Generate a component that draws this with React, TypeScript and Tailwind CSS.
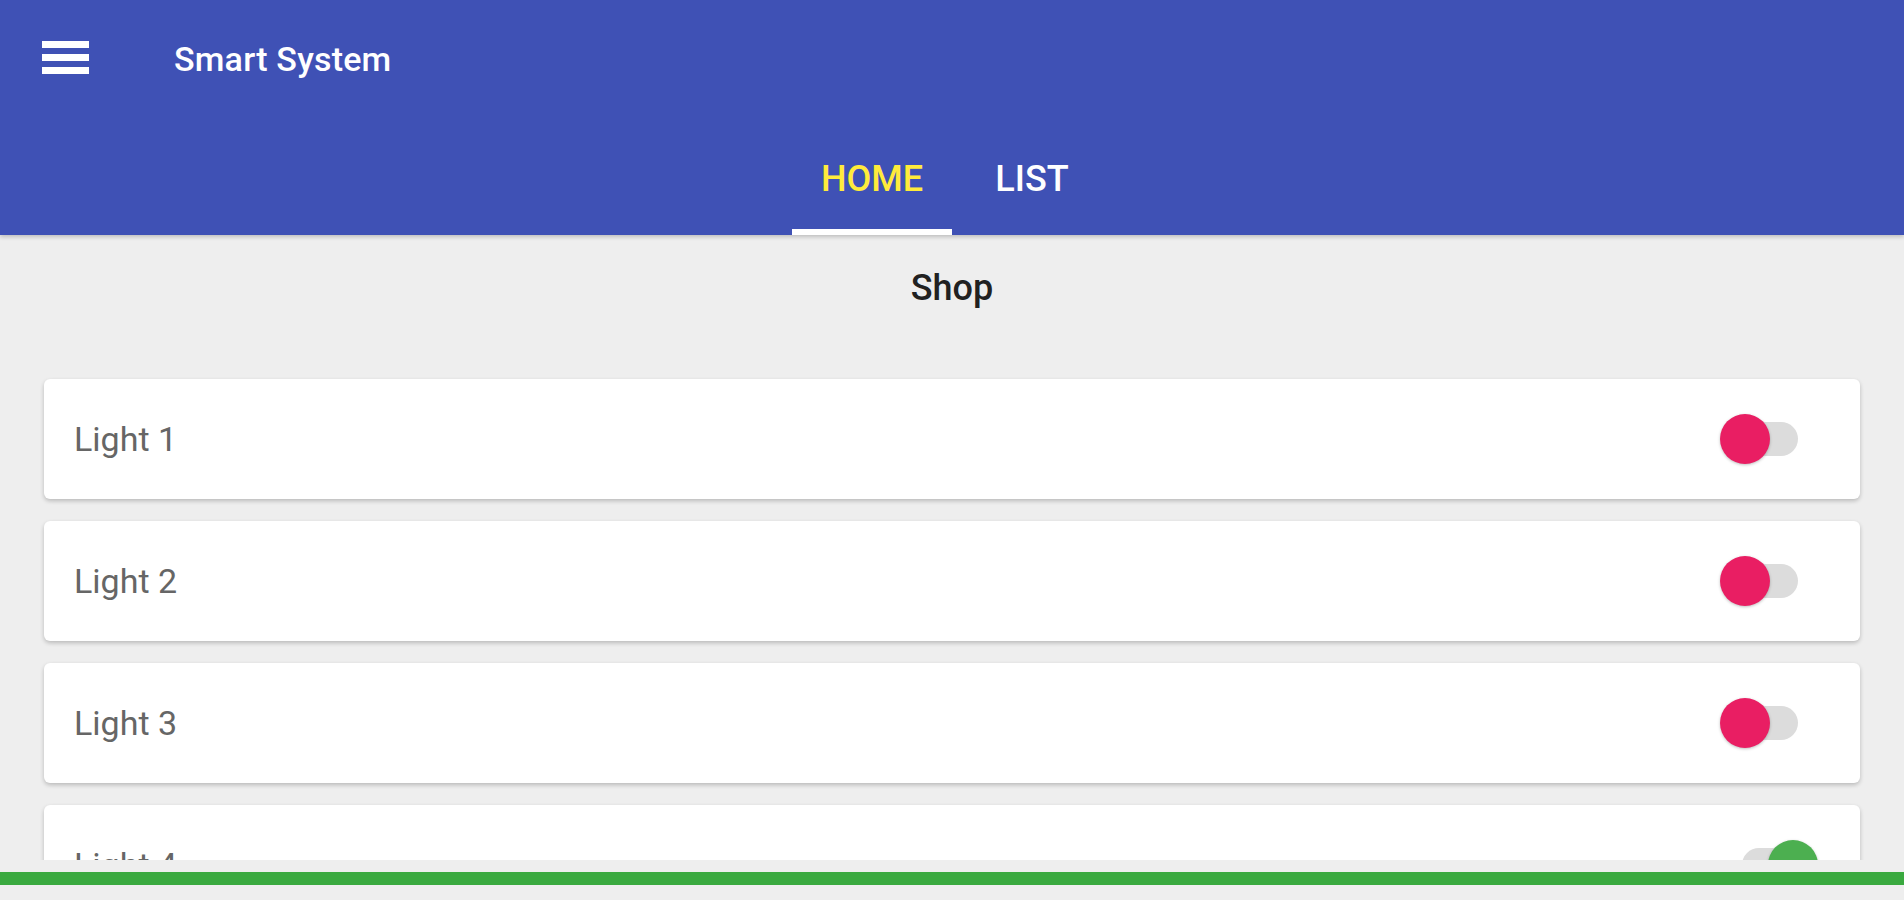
import React from "react";

function Switch({ on }: { on: boolean }) {
  return (
    <div className="relative w-[100px] h-[50px]">
      {on ? (
        <>
          <div className="absolute left-[22px] top-[8px] w-[76px] h-[34px] rounded-full bg-[#dcdcdc]" />
          <div className="absolute right-[2px] top-0 w-[50px] h-[50px] rounded-full bg-[#4caf50] shadow-[0_1px_3px_rgba(0,0,0,0.25)]" />
        </>
      ) : (
        <>
          <div className="absolute left-[2px] top-[8px] w-[76px] h-[34px] rounded-full bg-[#dcdcdc]" />
          <div className="absolute left-0 top-0 w-[50px] h-[50px] rounded-full bg-[#e91e63] shadow-[0_1px_3px_rgba(0,0,0,0.25)]" />
        </>
      )}
    </div>
  );
}

function Card({ label, on }: { label: string; on: boolean }) {
  return (
    <div className="h-[120px] bg-white rounded-[6px] shadow-[0_2px_4px_rgba(0,0,0,0.22)] flex items-center justify-between pl-[30px] pr-[40px] shrink-0">
      <span className="text-[34px] text-[#666666] font-normal">{label}</span>
      <Switch on={on} />
    </div>
  );
}

export default function App() {
  return (
    <div
      className="h-screen w-full flex flex-col bg-[#eeeeee] overflow-hidden"
      style={{ fontFamily: "Roboto, 'Noto Sans', sans-serif" }}
    >
      <header className="h-[235px] bg-[#3f51b5] flex flex-col shrink-0 shadow-[0_2px_4px_rgba(0,0,0,0.2)] relative z-10">
        <div className="h-[114px] flex items-center pl-[42px]">
          <div className="flex flex-col gap-[6px] w-[47px]">
            <div className="h-[7px] bg-white" />
            <div className="h-[7px] bg-white" />
            <div className="h-[7px] bg-white" />
          </div>
          <div className="ml-[85px] text-white text-[34px] font-medium tracking-[0.2px] mt-[4px]">
            Smart System
          </div>
        </div>
        <div className="flex-1 flex justify-center">
          <div className="w-[160px] flex flex-col">
            <div className="flex-1 flex items-center justify-center pt-[14px] text-[36px] font-medium text-[#ffeb3b]">
              HOME
            </div>
            <div className="h-[6px] bg-white" />
          </div>
          <div className="w-[160px] flex flex-col">
            <div className="flex-1 flex items-center justify-center pt-[14px] text-[36px] font-medium text-white">
              LIST
            </div>
            <div className="h-[6px]" />
          </div>
        </div>
      </header>
      <main className="h-[625px] overflow-hidden shrink-0 flex flex-col">
        <div className="h-[144px] flex items-start justify-center pt-[26px] shrink-0">
          <h1 className="text-[36px] font-medium text-[#212121]">Shop</h1>
        </div>
        <div className="flex flex-col gap-[22px] px-[44px]">
          <Card label="Light 1" on={false} />
          <Card label="Light 2" on={false} />
          <Card label="Light 3" on={false} />
          <Card label="Light 4" on={true} />
        </div>
      </main>
      <div className="flex-1 flex flex-col pt-[12px]">
        <div className="h-[13px] bg-[#3aa93f]" />
      </div>
    </div>
  );
}
